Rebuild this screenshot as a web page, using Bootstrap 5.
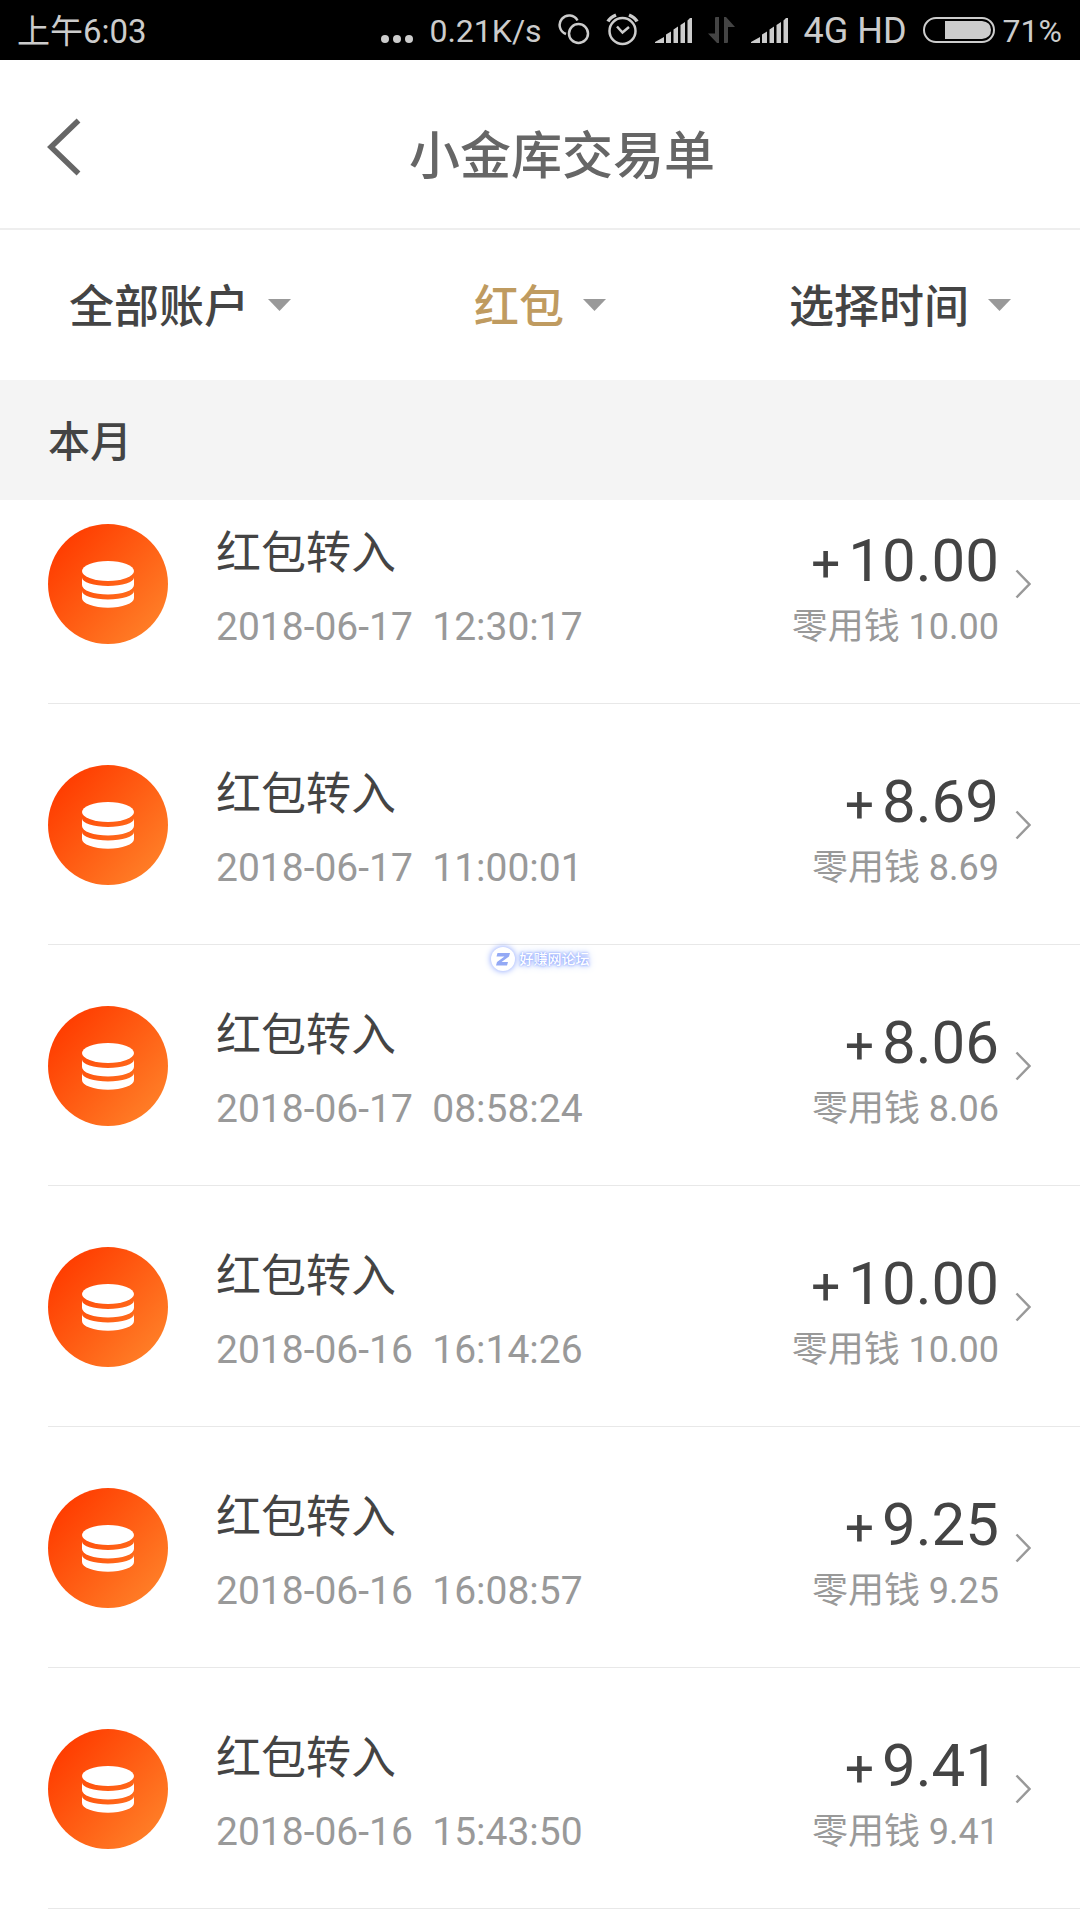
<!DOCTYPE html>
<html lang="zh-CN">
<head>
<meta charset="utf-8">
<meta name="viewport" content="width=device-width, initial-scale=1">
<title>小金库交易单</title>
<link href="https://cdn.jsdelivr.net/npm/bootstrap@5.3.0/dist/css/bootstrap.min.css" rel="stylesheet">
<style>
body{font-family:Roboto,"Noto Sans CJK SC",sans-serif;color:#444;background:#fff;overflow-x:hidden}
.status-bar{height:60px;padding:0 18px 0 17px;background:#000;color:#ccc;font-size:33px;line-height:63px}
.status-icons{gap:16px;font-size:32px}
.net-label{font-size:36px}
.power{gap:8px}
.page-top{z-index:2;background:#fff}
.title-bar{height:170px;padding-left:44px;border-bottom:2px solid #eee}
.back-link{width:0;padding-top:6px;color:#666}
.page-title{font-size:51px;line-height:60px;font-weight:500;color:#666;padding-top:26px}
.filters{height:150px}
.filter-box{gap:18px}
.filter-select{width:auto;padding:6px 0 0;border:0;background:none;font-size:45px;line-height:60px;font-weight:500;color:#444;border-radius:0}
.filter-select.is-chosen{color:#bf9b60}
.month-bar{height:120px;padding:0 48px;background:#f4f4f4;font-size:42px;font-weight:500;line-height:126px}
/* the list is scrolled a little way under the fixed top part */
.records{margin-top:-37px;padding-left:48px}
.record{height:241px;padding:2px 48px 0 0;border-bottom:1px solid #e8e8e8;color:#444}
.record-text{margin-left:48px}
.record-name{padding-top:5px;font-size:45px;line-height:81px}
.record-time{font-size:39px;line-height:66px;color:#999;white-space:pre}
.record-amount{padding-top:2px;font-size:60px;line-height:80px}
.plus-sign{font-size:51px;margin-right:8px}
.record-source{font-size:36px;line-height:46px;color:#999}
.chevron{margin-left:16px;margin-right:1px;color:#999}
.site-stamp{left:0;right:0;top:945px;z-index:3;gap:5px;color:#fff;font-size:14px;line-height:28px;font-weight:500;text-shadow:0 0 2px #7f9bff,0 0 4px #93acff,0 0 8px #a9bdff}
.site-stamp svg{overflow:visible;filter:drop-shadow(0 0 3px #7f9bff)}
</style>
<script src="https://cdn.jsdelivr.net/npm/bootstrap@5.3.0/dist/js/bootstrap.bundle.min.js"></script>
</head>
<body>
<svg class="position-absolute" width="0" height="0" aria-hidden="true">
  <defs>
    <linearGradient id="fire" x1="0.1" y1="0.15" x2="0.9" y2="0.85"><stop offset="0" stop-color="#ff3c00"/><stop offset="1" stop-color="#ff7e27"/></linearGradient>
  </defs>
  <symbol id="bars" viewBox="0 0 37 60"><path fill="currentColor" d="M0 43V42L9 37V43ZM11 43V34.500L16 31.500V43ZM18.500 43V29.500L23 26.500V43ZM25.500 43V25L30 22V43ZM32.500 43V20.500L35 18H37V43Z"/></symbol>
  <symbol id="coins" viewBox="0 0 120 120">
    <circle cx="60" cy="60" r="60" fill="url(#fire)"/>
    <g fill="#fff"><ellipse cx="60" cy="47" rx="26" ry="10"/>
    <path d="M34 53.500A26 8.500 0 0 0 86 53.500V61A26 9.500 0 0 1 34 61Z"/>
    <path d="M34 67A26 8.500 0 0 0 86 67V74A26 9.700 0 0 1 34 74Z"/></g>
  </symbol>
  <symbol id="next" viewBox="0 0 16 30"><path d="M1.500 1.500L14.500 15L1.500 28.500" fill="none" stroke="currentColor" stroke-width="2.500"/></symbol>
  <symbol id="caret" viewBox="0 0 23 12"><path d="M0 0H23L11.500 12Z" fill="#999"/></symbol>
</svg>

<div class="page-top position-relative">
  <div class="status-bar d-flex justify-content-between">
    <span>上午6:03</span>
    <div class="status-icons d-flex">
      <svg width="32" height="60" viewBox="0 0 32 60" fill="currentColor"><circle cx="4" cy="39" r="4"/><circle cx="16" cy="39" r="4"/><circle cx="28" cy="39" r="4"/></svg>
      <span>0.21K/s</span>
      <svg width="32" height="60" viewBox="0 0 32 60" fill="none" stroke="currentColor" stroke-width="2.500"><circle cx="20.500" cy="33.500" r="9.500"/><path d="M8 34A9.500 9.500 0 1 1 19.500 20.500"/></svg>
      <svg width="33" height="60" viewBox="0 0 33 60" fill="none" stroke="currentColor" stroke-width="2.500"><circle cx="16.500" cy="31" r="13"/><path d="M11 26.500L16.500 32.500L23 27"/><path stroke-width="3.500" d="M2 21.500Q4 17.500 10 15M31 21.500Q29 17.500 23 15"/></svg>
      <svg width="37" height="60"><use href="#bars"/></svg>
      <svg width="27" height="60" viewBox="0 0 27 60" fill="#444"><path d="M7 18Q7 17 8 17H11V43H9L0 33.500H7ZM16 17H18L27 27H20V42Q20 43 19 43H16Z"/></svg>
      <svg width="37" height="60"><use href="#bars"/></svg>
      <span class="net-label">4G HD</span>
      <div class="power d-flex">
        <svg width="72" height="60" viewBox="0 0 72 60"><rect x="1" y="18" width="70" height="24" rx="12" fill="none" stroke="currentColor" stroke-width="2"/><path fill="currentColor" d="M22 21H59Q68 22 68 30Q68 38 59 39H22Z"/></svg>
        <span>71%</span>
      </div>
    </div>
  </div>

  <header class="title-bar d-flex align-items-center">
    <a class="back-link d-flex" href="#" aria-label="返回"><svg class="flex-shrink-0" width="40" height="58" viewBox="0 0 40 58"><path d="M34.500 2.500L7 29L34.500 55.500" fill="none" stroke="currentColor" stroke-width="5.500"/></svg></a>
    <h1 class="page-title flex-grow-1 text-center mb-0">小金库交易单</h1>
  </header>

  <div class="filters row g-0 align-items-center">
    <div class="col filter-box d-flex justify-content-center align-items-center">
      <select class="filter-select form-select" aria-label="账户"><option>全部账户</option></select>
      <svg width="23" height="12"><use href="#caret"/></svg>
    </div>
    <div class="col filter-box d-flex justify-content-center align-items-center">
      <select class="filter-select is-chosen form-select" aria-label="类型"><option>红包</option></select>
      <svg width="23" height="12"><use href="#caret"/></svg>
    </div>
    <div class="col filter-box d-flex justify-content-center align-items-center">
      <select class="filter-select form-select" aria-label="时间"><option>选择时间</option></select>
      <svg width="23" height="12"><use href="#caret"/></svg>
    </div>
  </div>
  <h2 class="month-bar mb-0">本月</h2>
</div>

<main class="records">
  <a class="record d-flex align-items-center text-decoration-none" href="#">
    <svg width="120" height="120"><use href="#coins"/></svg>
    <div class="record-text flex-grow-1"><div class="record-name">红包转入</div><div class="record-time">2018-06-17  12:30:17</div></div>
    <div class="text-end"><div class="record-amount"><span class="plus-sign">+</span>10.00</div><div class="record-source">零用钱 10.00</div></div>
    <svg class="chevron" width="16" height="30"><use href="#next"/></svg>
  </a>
  <a class="record d-flex align-items-center text-decoration-none" href="#">
    <svg width="120" height="120"><use href="#coins"/></svg>
    <div class="record-text flex-grow-1"><div class="record-name">红包转入</div><div class="record-time">2018-06-17  11:00:01</div></div>
    <div class="text-end"><div class="record-amount"><span class="plus-sign">+</span>8.69</div><div class="record-source">零用钱 8.69</div></div>
    <svg class="chevron" width="16" height="30"><use href="#next"/></svg>
  </a>
  <a class="record d-flex align-items-center text-decoration-none" href="#">
    <svg width="120" height="120"><use href="#coins"/></svg>
    <div class="record-text flex-grow-1"><div class="record-name">红包转入</div><div class="record-time">2018-06-17  08:58:24</div></div>
    <div class="text-end"><div class="record-amount"><span class="plus-sign">+</span>8.06</div><div class="record-source">零用钱 8.06</div></div>
    <svg class="chevron" width="16" height="30"><use href="#next"/></svg>
  </a>
  <a class="record d-flex align-items-center text-decoration-none" href="#">
    <svg width="120" height="120"><use href="#coins"/></svg>
    <div class="record-text flex-grow-1"><div class="record-name">红包转入</div><div class="record-time">2018-06-16  16:14:26</div></div>
    <div class="text-end"><div class="record-amount"><span class="plus-sign">+</span>10.00</div><div class="record-source">零用钱 10.00</div></div>
    <svg class="chevron" width="16" height="30"><use href="#next"/></svg>
  </a>
  <a class="record d-flex align-items-center text-decoration-none" href="#">
    <svg width="120" height="120"><use href="#coins"/></svg>
    <div class="record-text flex-grow-1"><div class="record-name">红包转入</div><div class="record-time">2018-06-16  16:08:57</div></div>
    <div class="text-end"><div class="record-amount"><span class="plus-sign">+</span>9.25</div><div class="record-source">零用钱 9.25</div></div>
    <svg class="chevron" width="16" height="30"><use href="#next"/></svg>
  </a>
  <a class="record d-flex align-items-center text-decoration-none" href="#">
    <svg width="120" height="120"><use href="#coins"/></svg>
    <div class="record-text flex-grow-1"><div class="record-name">红包转入</div><div class="record-time">2018-06-16  15:43:50</div></div>
    <div class="text-end"><div class="record-amount"><span class="plus-sign">+</span>9.41</div><div class="record-source">零用钱 9.41</div></div>
    <svg class="chevron" width="16" height="30"><use href="#next"/></svg>
  </a>
</main>

<div class="site-stamp position-absolute d-flex justify-content-center align-items-center">
  <svg width="24" height="24" viewBox="0 0 24 24"><circle cx="12" cy="12" r="12" fill="#fff"/><path d="M6.500 6H19L18 9.500L10.500 15H17L16 18.500H5L6 15L13.500 9.500H5.500Z" fill="#93a9f5"/></svg>
  <span>好赚网论坛</span>
</div>
</body>
</html>
